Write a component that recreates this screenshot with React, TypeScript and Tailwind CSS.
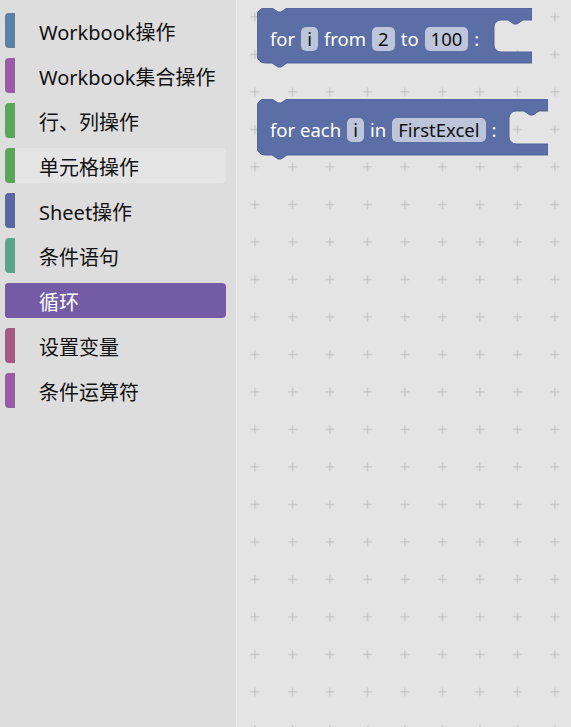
const categories = [
  { name: "Workbook操作", color: "bg-[#5b80a5]" },
  { name: "Workbook集合操作", color: "bg-[#9a5ca6]" },
  { name: "行、列操作", color: "bg-[#5ba55b]" },
  { name: "单元格操作", color: "bg-[#5ba55b]", hover: true },
  { name: "Sheet操作", color: "bg-[#5b67a5]" },
  { name: "条件语句", color: "bg-[#5ba58c]" },
  { name: "循环", color: "bg-[#745ba5]", selected: true },
  { name: "设置变量", color: "bg-[#a55b80]" },
  { name: "条件运算符", color: "bg-[#9a5ca6]" },
];

function blockPath(w: number, h: number, cx: number, ct: number, cb: number) {
  return [
    `M 0 8 A 8 8 0 0 1 8 0 H 15 l 6 4 h 3 l 6 -4 H ${w} V ${ct}`,
    `H ${w - 9} l -6 4 h -3 l -6 -4 H ${cx + 7} A 7 7 0 0 0 ${cx} ${ct + 7}`,
    `V ${cb - 7} A 7 7 0 0 0 ${cx + 7} ${cb} H ${w} V ${h}`,
    `H 30 l -6 4 h -3 l -6 -4 H 8 A 8 8 0 0 1 0 ${h - 8} Z`,
  ].join(" ");
}

function Field({ children }: { children: React.ReactNode }) {
  return (
    <span className="flex h-[24px] items-center rounded-[5px] bg-[#bdc5db] px-[6px] text-[#111]">
      {children}
    </span>
  );
}

function Block({
  left,
  top,
  w,
  h,
  cx,
  ct,
  cb,
  children,
}: {
  left: number;
  top: number;
  w: number;
  h: number;
  cx: number;
  ct: number;
  cb: number;
  children: React.ReactNode;
}) {
  return (
    <div className="absolute" style={{ left, top, width: w, height: h + 5 }}>
      <svg className="absolute inset-0" width={w} height={h + 5}>
        <path d={blockPath(w, h, cx, ct, cb)} fill="#5b6ea5" stroke="#51629a" strokeWidth="1" />
      </svg>
      <div className="absolute left-[13px] top-[19px] flex h-[24px] items-center gap-[6px] text-[18.5px] text-white">
        {children}
      </div>
    </div>
  );
}

export default function App() {
  return (
    <div className="flex h-screen w-full overflow-hidden font-['Noto_Sans','Noto_Sans_CJK_SC',sans-serif]">
      <aside className="w-[237px] shrink-0 border-r border-[#e9e9e9] bg-[#dddddd] pt-[13px]">
        <ul className="flex flex-col gap-[10px]">
          {categories.map((c) => (
            <li
              key={c.name}
              className={`ml-[5px] mr-[10px] flex h-[35px] items-center rounded-[4px] ${
                c.selected ? c.color : c.hover ? "bg-[#e4e4e4]" : ""
              }`}
            >
              <span className={`h-full w-[10px] shrink-0 rounded-l-[4px] ${c.color}`} />
              <span
                className={`ml-[24px] translate-y-[2px] text-[20px] leading-none ${
                  c.selected ? "text-white" : "text-[#111]"
                }`}
              >
                {c.name}
              </span>
            </li>
          ))}
        </ul>
      </aside>
      <main className="relative flex-1 bg-[#e4e4e4]">
        <svg className="absolute inset-0 h-full w-full">
          <defs>
            <pattern id="grid" x="-0.5" y="-1.5" width="37.5" height="37.5" patternUnits="userSpaceOnUse">
              <path d="M 14 18.5 H 23 M 18.5 14 V 23" stroke="#bdbdbd" strokeWidth="1" />
            </pattern>
          </defs>
          <rect width="100%" height="100%" fill="url(#grid)" />
        </svg>
        <Block left={20} top={8} w={275} h={55} cx={237} ct={12} cb={44}>
          <span>for</span>
          <Field>i</Field>
          <span>from</span>
          <Field>2</Field>
          <span>to</span>
          <Field>100</Field>
          <span>:</span>
        </Block>
        <Block left={20} top={99} w={291} h={56} cx={252} ct={12} cb={45}>
          <span>for each</span>
          <Field>i</Field>
          <span>in</span>
          <Field>FirstExcel</Field>
          <span>:</span>
        </Block>
      </main>
    </div>
  );
}
